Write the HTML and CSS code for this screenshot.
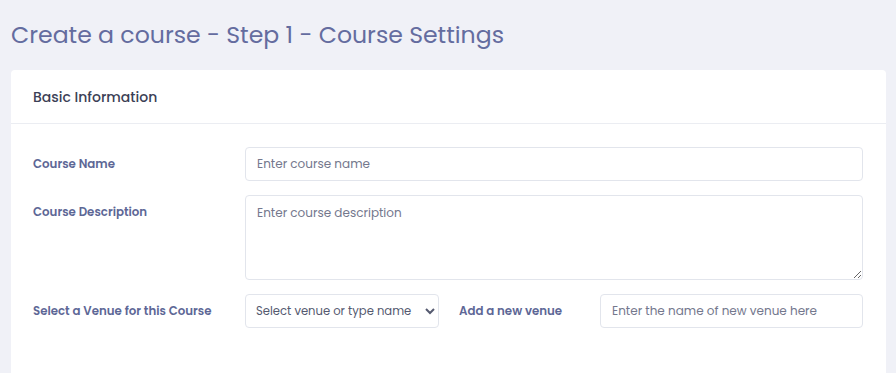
FILE: index.html
```html
<!DOCTYPE html>
<html lang="en">
<head>
  <meta charset="UTF-8" />
  <meta name="viewport" content="width=device-width, initial-scale=1.0"/>
  <title>Create a course - Step 1</title>
  <link rel="stylesheet" href="styles.css">
</head>
<body>

  <h1 class="page-title">Create a course - Step 1 - Course Settings</h1>

  <div class="card">
    <div class="card-header">Basic Information</div>

    <div class="card-body">
      <div class="form-row">
        <label for="courseName">Course Name</label>
        <input type="text" id="courseName" placeholder="Enter course name" />
      </div>

      <div class="form-row">
        <label for="courseDesc">Course Description</label>
        <textarea id="courseDesc" placeholder="Enter course description"></textarea>
      </div>

      <div class="form-row">
        <label for="venue">Select a Venue for this Course</label>
        <div class="venue-group">
          <select id="venue">
            <option>Select venue or type name</option>
          </select>
          <label for="newVenue">Add a new venue</label>
          <input type="text" id="newVenue" placeholder="Enter the name of new venue here" />
        </div>
      </div>
    </div>
  </div>

</body>
</html>
```

FILE: styles.css
```css
body {
  font-family: 'Poppins', 'Inter', sans-serif;
  margin: 0;
  background-color: #f0f1f7;
  color: #3b3e55;
}

.page-title {
  margin: 0;
  padding: 17px 11px 0;
  height: 53px;
  font-size: 23.6px;
  font-weight: 400;
  color: #646c9f;
}

.card {
  margin: 0 10px 0 11px;
  background-color: #fff;
  border-radius: 4px;
}

.card-header {
  height: 53px;
  line-height: 54px;
  padding: 0 22px;
  font-size: 14px;
  font-weight: 500;
  color: #3c3f56;
  border-bottom: 1px solid #ebedf2;
}

.card-body {
  padding: 23px 23px 40px 22px;
}

.form-row {
  display: grid;
  grid-template-columns: 212px 1fr;
  margin-bottom: 14px;
}

.form-row label {
  padding-top: 9px;
  font-size: 11.8px;
  font-weight: 600;
  color: #5d6796;
}

input,
textarea,
select {
  font-family: inherit;
  font-size: 12px;
  color: #555a70;
  background-color: #fff;
  border: 1px solid #e2e5ec;
  border-radius: 4px;
  padding: 0 11px;
  box-sizing: border-box;
}

input {
  height: 34px;
}

textarea {
  height: 85px;
  padding-top: 8px;
}

input::placeholder,
textarea::placeholder {
  color: #74788d;
}

.venue-group {
  display: flex;
  align-items: flex-start;
}

.venue-group select {
  width: 194px;
  height: 34px;
  padding: 0 2px 0 6px;
  font-size: 11.6px;
}

.venue-group label {
  width: 141px;
  padding-left: 20px;
}

.venue-group input {
  flex: 1;
}
```
